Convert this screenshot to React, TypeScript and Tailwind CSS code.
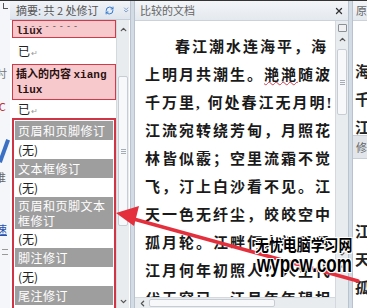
import React from 'react';
import { RefreshCw, ChevronsDown, X, ChevronUp, ChevronDown, ChevronLeft } from 'lucide-react';

const cjk = { fontFamily: '"Noto Sans CJK SC", "Liberation Sans", sans-serif' };
const serifDoc = { fontFamily: '"Liberation Serif", "Noto Sans CJK SC", serif' };
const halo = '1px 1px 0 #fff, -1px -1px 0 #fff, 1px -1px 0 #fff, -1px 1px 0 #fff, 0 1px 0 #fff, 0 -1px 0 #fff';

const poem = [
  '春江潮水连海平，海',
  '上明月共潮生。滟滟随波',
  '千万里, 何处春江无月明!',
  '江流宛转绕芳甸，月照花',
  '林皆似霰；空里流霜不觉',
  '飞，汀上白沙看不见。江',
  '天一色无纤尘，皎皎空中',
  '孤月轮。江畔何人初见月?',
  '江月何年初照人？人生代',
  '代无穷已，江月年年望相',
];

function GrayHead({ children, tall }: { children: React.ReactNode; tall?: boolean }) {
  return (
    <div className={`bg-[#9e9e9e] text-white text-[12px] tracking-[0.5px] leading-[15px] px-[3px] whitespace-nowrap ${tall ? 'py-[1px]' : 'h-[19px] flex items-center'}`}>
      {children}
    </div>
  );
}

function None() {
  return <div className="bg-white text-[12px] h-[19px] flex items-center px-[3px] text-[#222]">(无)</div>;
}

function VScroll({ thumbTop, thumbH, children }: { thumbTop: number; thumbH: number; children?: React.ReactNode }) {
  return (
    <div className="w-[13px] h-full bg-[#e9ecef] border-l border-[#d4d9df] flex flex-col items-center relative">
      {children}
      <div
        className="absolute left-[1px] right-[1px] bg-[#f7f8f9] border border-[#c8cdd3] rounded-[2px] flex items-center justify-center"
        style={{ top: thumbTop, height: thumbH }}
      >
        <div className="flex flex-col gap-[1px]">
          <div className="w-[5px] h-px bg-[#a5acb5]" />
          <div className="w-[5px] h-px bg-[#a5acb5]" />
          <div className="w-[5px] h-px bg-[#a5acb5]" />
        </div>
      </div>
    </div>
  );
}

export default function App() {
  return (
    <div className="w-[367px] h-[308px] overflow-hidden relative bg-white border-t border-[#333]" style={cjk}>
      <div className="flex h-full">
        {/* left strip of main document */}
        <div className="w-[10px] h-full bg-[#f4f6f9] relative overflow-hidden text-[11px]">
          <div className="absolute left-[3px] top-[2px] w-[5px] h-[6px] border-l border-b border-[#555]" />
          <div className="absolute left-[-4px] top-[64px] text-[#777]">吋</div>
          <div className="absolute left-[-5px] top-[97px] text-[#c03030]">[C</div>
          <div className="absolute left-[2px] top-[138px] w-[4px] h-[24px] bg-[#3a6fc4] rotate-[20deg]" />
          <div className="absolute left-[-5px] top-[168px] text-[#666]">推</div>
          <div className="absolute left-[-4px] top-[220px] text-[#2450b0] underline">速</div>
          <div className="absolute left-[2px] top-[248px] w-[6px] h-px bg-[#999]" />
          <div className="absolute left-[2px] top-[253px] w-[6px] h-px bg-[#999]" />
        </div>

        {/* summary pane */}
        <div className="w-[120px] h-full flex flex-col">
          <div className="h-[19px] bg-gradient-to-b from-[#f1f4f8] to-[#dfe5ed] border-b border-[#c6cfd9] flex items-center pl-[6px] text-[11px] text-[#555] whitespace-nowrap">
            <span>摘要: 共 2 处修订</span>
            <RefreshCw size={11} strokeWidth={2.6} className="ml-[6px] text-[#2f77d0]" />
            <ChevronsDown size={10} strokeWidth={2.5} className="ml-[8px] text-[#6d8fbf]" />
          </div>
          <div className="flex flex-1 min-h-0">
            <div className="w-[106px] overflow-hidden pl-[2px] text-[12px]">
              <div className="bg-[#f7c9cd] border border-[#d23a48] h-[18px] px-[3px] relative">
                <div className="absolute top-[-2px] left-[4px] text-[9px] text-[#444] tracking-[1px]">- - - - - - - - -</div>
                <div className="font-bold text-[11px] leading-[12px] pt-[4px] text-[#3a1a1a]" style={{ fontFamily: '"Liberation Mono", monospace' }}>liux</div>
              </div>
              <div className="h-[26px] flex items-center pl-[6px] text-[#222]">已<span className="text-[8px] text-[#999] ml-[1px] mt-[4px]">↵</span></div>
              <div className="bg-[#f7c9cd] border border-[#d23a48] px-[3px] py-[2px] text-[11px] leading-[13px] font-bold text-[#2a1010]">
                插入的内容 <span style={{ fontFamily: '"Liberation Mono", monospace' }}>xiang liux</span>
              </div>
              <div className="h-[18px] flex items-center pl-[6px] text-[#222]">已<span className="text-[8px] text-[#999] ml-[1px] mt-[4px]">↵</span></div>
              <div className="border-2 border-[#d03545] px-[1px] pt-[1px] h-[220px] overflow-hidden">
                <GrayHead>页眉和页脚修订</GrayHead>
                <None />
                <GrayHead>文本框修订</GrayHead>
                <None />
                <GrayHead tall>页眉和页脚文本<br />框修订</GrayHead>
                <None />
                <GrayHead>脚注修订</GrayHead>
                <None />
                <GrayHead>尾注修订</GrayHead>
                <None />
              </div>
            </div>
            <VScroll thumbTop={56} thumbH={150}>
              <ChevronUp size={9} strokeWidth={3.5} className="mt-[5px] text-[#555]" />
              <ChevronDown size={9} strokeWidth={3.5} className="absolute bottom-[2px] text-[#555]" />
            </VScroll>
          </div>
        </div>

        {/* splitter */}
        <div className="w-[5px] h-full bg-[#d3dbe5] border-x border-[#b9c3cf]" />

        {/* compared document */}
        <div className="w-[213px] h-full flex flex-col">
          <div className="h-[20px] bg-gradient-to-b from-[#f3f5f8] to-[#e4e9ef] border-b border-[#cbd2db] flex items-center justify-between pl-[5px] pr-[4px] text-[11px] text-[#666]">
            <span>比较的文档</span>
            <X size={10} strokeWidth={3} className="text-[#333]" />
          </div>
          <div className="flex flex-1 min-h-0">
            <div className="flex-1 flex flex-col min-w-0">
              <div className="flex-1 overflow-hidden pl-[10px] pt-[12px] bg-white">
                {poem.map((line, i) => (
                  <div
                    key={i}
                    className={`whitespace-nowrap text-[15px] leading-[28px] font-bold tracking-[2px] text-[#1a1a1a] ${i === 0 ? 'pl-[30px]' : ''}`}
                    style={serifDoc}
                  >
                    {i === 1 ? (
                      <>
                        上明月共潮生。<span className="underline decoration-wavy decoration-[#d04050] decoration-1">滟滟</span>随波
                      </>
                    ) : (
                      line
                    )}
                  </div>
                ))}
              </div>
              <div className="h-[11px] bg-[#e9ecef] border-t border-[#d4d9df] flex items-center relative">
                <ChevronLeft size={9} strokeWidth={3.5} className="ml-[3px] text-[#555]" />
                <div className="absolute left-[14px] right-[60px] top-[1px] bottom-[1px] bg-[#f7f8f9] border border-[#c8cdd3] rounded-[2px]" />
              </div>
            </div>
            <VScroll thumbTop={28} thumbH={66}>
              <div className="mt-[3px] w-[9px] h-[8px] border border-[#8a9098] bg-[#f0f0f0] rounded-[1px]" />
              <ChevronUp size={9} strokeWidth={3.5} className="mt-[3px] text-[#555]" />
              <div className="absolute bottom-[40px] flex flex-col items-center text-[#666]">
                <ChevronDown size={8} strokeWidth={3.5} />
                <div className="w-[3px] h-[3px] rounded-full bg-[#777] my-[2px]" />
                <div className="w-[3px] h-[3px] rounded-full bg-[#777]" />
              </div>
            </VScroll>
          </div>
        </div>

        {/* splitter */}
        <div className="w-[5px] h-full bg-[#d3dbe5] border-x border-[#b9c3cf]" />

        {/* original document */}
        <div className="flex-1 h-full flex flex-col overflow-hidden">
          <div className="h-[20px] bg-gradient-to-b from-[#f3f5f8] to-[#e4e9ef] border-b border-[#cbd2db] flex items-center pl-[3px] text-[11px] text-[#666]">原</div>
          <div className="flex-1 relative bg-white text-[15px] font-bold text-[#222]" style={serifDoc}>
            <div className="absolute left-[2px] top-[40px]">海</div>
            <div className="absolute left-[2px] top-[68px]">千</div>
            <div className="absolute left-[2px] top-[96px]">江</div>
            <div className="absolute left-0 right-0 top-[114px] h-[24px] bg-[#e2e6eb] border-y border-[#c8ced6] text-[11px] font-normal text-[#666] pl-[3px] pt-[3px]" style={cjk}>修</div>
            <div className="absolute left-[2px] top-[200px]">江</div>
            <div className="absolute left-[2px] top-[228px]">天</div>
            <div className="absolute left-[2px] top-[256px]">孤</div>
          </div>
        </div>
      </div>

      {/* red arrow */}
      <svg className="absolute inset-0 pointer-events-none" width="367" height="308">
        <line x1="358" y1="280" x2="130" y2="217" stroke="#e3303c" strokeWidth="3.5" strokeLinecap="round" />
        <polygon points="116,212 139,205 134,225" fill="#e3303c" />
      </svg>

      {/* watermark */}
      <div className="absolute left-[255px] top-[235px] w-[100px] flex flex-col items-start leading-none pointer-events-none">
        <div
          className="text-[16px] font-bold text-black whitespace-nowrap origin-left scale-x-[0.87]"
          style={{ ...cjk, textShadow: halo }}
        >
          无忧电脑学习网
        </div>
        <div
          className="text-[23px] font-bold text-black whitespace-nowrap origin-left scale-x-[0.74] ml-[2px] mt-[1px]"
          style={{ fontFamily: '"Liberation Sans", sans-serif', textShadow: halo }}
        >
          wypcw.com
        </div>
      </div>
    </div>
  );
}
